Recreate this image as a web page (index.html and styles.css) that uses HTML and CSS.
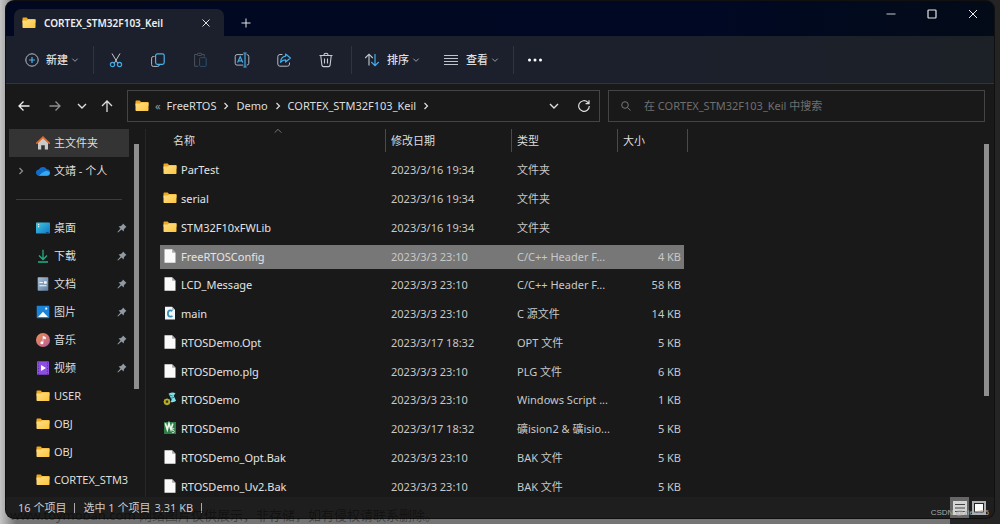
FILE: index.html
```html
<!DOCTYPE html>
<html lang="zh-CN">
<head>
<meta charset="utf-8">
<title>CORTEX_STM32F103_Keil</title>
<link rel="stylesheet" href="styles.css">
</head>
<body>
<svg class="defs" aria-hidden="true">
  <linearGradient id="g-folder" x1="0" y1="0" x2="1" y2="1"><stop offset="0" stop-color="#ffe08a"/><stop offset="1" stop-color="#fcc53c"/></linearGradient>
  <linearGradient id="g-desk" x1="0" y1="0" x2="1" y2="1"><stop offset="0" stop-color="#3ccbe0"/><stop offset="1" stop-color="#1473c4"/></linearGradient>
  <linearGradient id="g-music" x1="0" y1="0" x2="1" y2="1"><stop offset="0" stop-color="#f0914f"/><stop offset="1" stop-color="#b45a9c"/></linearGradient>
  <linearGradient id="g-doc" x1="0" y1="0" x2="1" y2="1"><stop offset="0" stop-color="#a9c0d6"/><stop offset="1" stop-color="#5f7e9e"/></linearGradient>
  <symbol id="folder" viewBox="0 0 14 14"><path d="M.5 2.500q0-.9.9-.9h3.300l1.300 1.300h6.600q.9 0 .9.9v3H.5z" fill="#f0a81c"/><path d="M.5 4.600h4.400l1.200-1h7.400v7.700q0 .8-.8.8H1.300q-.8 0-.8-.8z" fill="url(#g-folder)"/></symbol>
  <symbol id="file" viewBox="0 0 14 14"><path d="M1.500.3h7.600l3.400 3.400v10H1.500z" fill="#fafafa"/><path d="M9.100.3v3.400h3.400z" fill="#a8a8a8"/></symbol>
  <symbol id="cfile" viewBox="0 0 14 14"><path d="M2 .8h7l3 3v9.700H2z" fill="#f4f7f9"/><path d="M9 .8v3h3z" fill="#a8b4bc"/><path d="M9.300 5.200Q8.600 4.400 7.300 4.400 4.900 4.400 4.900 7.600 4.900 10.700 7.300 10.700 8.600 10.700 9.400 9.900" fill="none" stroke="#3c8fb4" stroke-width="1.800"/></symbol>
  <symbol id="script" viewBox="0 0 14 14"><path d="M5.500 1.800q4-2.200 7-.6l-1.800 2.500 2.400 5q-2 2-5.400 1.300l1-2.400z" fill="#7fe0e8"/><path d="M6.500 3l3.200 1M7.800 6.200l3.400-.8" stroke="#177f8c" stroke-width=".9"/><circle cx="4" cy="9.800" r="2.300" fill="none" stroke="#c9c02c" stroke-width="1.700"/><path d="M4 6.200v7.200M.4 9.800h7.200M1.500 7.300l5 5M6.500 7.300l-5 5" stroke="#a8a024" stroke-width=".8"/><circle cx="4" cy="9.800" r="1" fill="#222"/></symbol>
  <symbol id="keil" viewBox="0 0 14 14"><path d="M1 1h12v12H1z" fill="#2f7d46"/><path d="M2.300 2.300l2 6.200 1.700-6 2 6 1.800-6" fill="none" stroke="#eaf5ec" stroke-width="1.700"/><path d="M11.300 7.700H9.300v1.700q2-.3 2 1.200 0 1.300-2.200 1.100" fill="none" stroke="#d5ecd9"/></symbol>
  <symbol id="home" viewBox="0 0 14 14"><path d="M2 6.200L7 1.600l5 4.600v7.300H8.800V9.300H5.200v4.200H2z" fill="#c9c9c9"/><path d="M.8 7.200L7 1.200l6.200 6" fill="none" stroke="#e3692a" stroke-width="1.700" stroke-linecap="round"/></symbol>
  <symbol id="cloud" viewBox="0 0 15 13"><path d="M3.500 11.500A3.200 3.200 0 0 1 3 5 4.800 4.800 0 0 1 11.500 4.500 3.500 3.500 0 0 1 11.600 11.500z" fill="#0f6cc8"/><path d="M3.200 11.600Q6.600 7.200 11.300 6.200 15 7 14.900 9.200 14.500 11.600 11.700 11.600z" fill="#35a9f2"/></symbol>
  <symbol id="desk" viewBox="0 0 14 14"><rect y="1.500" width="14" height="11" rx=".8" fill="url(#g-desk)"/><path d="M2 3h1.200v1.200H2zM2 5h1.200v1.200H2z" fill="#e9fbff"/><path d="M10 11.500h2.500" stroke="#0b4d8c"/></symbol>
  <symbol id="down" viewBox="0 0 14 14"><path d="M7 .7v9.500M3 6.500l4 4 4-4M2 13h10" fill="none" stroke="#20b088" stroke-width="1.300"/></symbol>
  <symbol id="doc" viewBox="0 0 14 14"><rect x="1.700" y=".3" width="10.600" height="13.500" rx=".8" fill="url(#g-doc)"/><path d="M3.400 5h3.500v1H3.400zM8 4.200h2.700v2.500H8zM3.400 8.200h7.200v1H3.400z" fill="#eff5fa"/></symbol>
  <symbol id="pic" viewBox="0 0 14 14"><rect x=".7" y=".7" width="12.600" height="12.600" rx=".8" fill="#1b84d8"/><path d="M2 12l5-5.200 5 5.200z" fill="#f5fbff"/><circle cx="10.200" cy="3.700" r="1.100" fill="#e8f5ff"/></symbol>
  <symbol id="music" viewBox="0 0 14 14"><circle cx="7" cy="7" r="7" fill="url(#g-music)"/><path d="M7 9.700V3.300l2.500 1v1.700L7 5" fill="#fff" stroke="#fff" stroke-width=".6"/><circle cx="5.900" cy="9.700" r="1.500" fill="#fff"/></symbol>
  <symbol id="video" viewBox="0 0 14 14"><rect x="1" y=".3" width="12" height="13.400" rx=".8" fill="#8d4fe0"/><path d="M5 4l5 3-5 3z" fill="#fff"/><path d="M2.500 1.500v12M11.500 1.500v12" stroke="#5a2aa8" stroke-dasharray="1.200 1.500"/></symbol>
  <symbol id="pin" viewBox="0 0 10 10"><path d="M6 .5L9.500 4 8.500 4.500 7 6.200 6.600 8.500 4.500 6.500 1 9.600.4 9 3.500 5.500 1.600 3.500 4 3 5.600 1.500z" fill="#909aa3"/></symbol>
  <symbol id="chev-r" viewBox="0 0 8 8"><path d="M2.500 1l3 3-3 3" fill="none" stroke="currentColor" stroke-width="1.200"/></symbol>
  <symbol id="chev-d" viewBox="0 0 12 12"><path d="M2 4l4 4 4-4" fill="none" stroke="currentColor" stroke-width="1.400"/></symbol>
  <symbol id="chev-u" viewBox="0 0 12 12"><path d="M2 8l4-4 4 4" fill="none" stroke="currentColor"/></symbol>
</svg>

<main class="window">
  <header class="titlebar">
    <div class="tab">
      <svg class="icon"><use href="#folder"/></svg>
      <span class="tab-title">CORTEX_STM32F103_Keil</span>
      <button class="btn" aria-label="关闭标签页"><svg class="i10" viewBox="0 0 10 10"><path d="M1.500 1.500l7 7M8.500 1.500l-7 7" stroke="#ddd"/></svg></button>
    </div>
    <button class="btn new-tab" aria-label="新标签页"><svg class="i10" viewBox="0 0 10 10"><path d="M5 .5v9M.5 5h9" stroke="#e4e4e4"/></svg></button>
    <div class="controls">
      <button class="btn" aria-label="最小化"><svg class="i10" viewBox="0 0 10 10"><path d="M.5 5h9" stroke="#c4c8d0"/></svg></button>
      <button class="btn" aria-label="最大化"><svg class="i10" viewBox="0 0 10 10"><rect x="1" y="1" width="8" height="8" rx=".8" fill="none" stroke="#e8e8e8" stroke-width="1.200"/></svg></button>
      <button class="btn" aria-label="关闭"><svg class="i10" viewBox="0 0 10 10"><path d="M1 1l8 8M9 1L1 9" stroke="#eee"/></svg></button>
    </div>
  </header>

  <div class="toolbar">
    <button class="btn cmd"><svg class="icon" viewBox="0 0 14 14" fill="none"><circle cx="7" cy="7" r="6.200" stroke="#b9bec6"/><path d="M7 4v6M4 7h6" stroke="#4cb4ec" stroke-width="1.200"/></svg>新建<svg class="i8"><use href="#chev-d"/></svg></button>
    <span class="sep"></span>
    <div class="tools">
      <button class="btn" aria-label="剪切"><svg class="i16" viewBox="0 0 16 16" fill="none"><path d="M4 1.500l5.700 9.700M12 1.500l-5.700 9.700" stroke="#c4c8ce"/><circle cx="4.500" cy="12.500" r="2.100" stroke="#3fa9e4" stroke-width="1.200"/><circle cx="11.500" cy="12.500" r="2.100" stroke="#3fa9e4" stroke-width="1.200"/></svg></button>
      <button class="btn" aria-label="复制"><svg class="i16" viewBox="0 0 16 16" fill="none"><path d="M4.500 4.500H3.300Q1.600 4.500 1.600 6.200v6.500q0 1.700 1.700 1.700h4.400q1.500 0 1.700-1.600" stroke="#b5bac2"/><rect x="5.600" y="1.800" width="8.600" height="10.600" rx="1.800" stroke="#49b1ec" stroke-width="1.200"/></svg></button>
      <button class="btn" aria-label="粘贴" disabled><svg class="i16" viewBox="0 0 16 16" fill="none"><path d="M5.500 2.500H2.600v11.800h3.600M9.700 2.500h2.600v2.200" stroke="#4a505c"/><rect x="5.300" y="1.300" width="4.600" height="2.200" rx="1" stroke="#4a505c"/><rect x="7.600" y="5.700" width="6.600" height="8.700" rx="1" stroke="#28506f"/></svg></button>
      <button class="btn" aria-label="重命名"><svg class="i16" viewBox="0 0 16 16" fill="none"><path d="M9.300 2.600H3q-1.800 0-1.800 1.800v6.900q0 1.800 1.800 1.800h6.300M12.700 2.600q2.100 0 2.100 1.800v6.900q0 1.800-2.100 1.800" stroke="#aeb4bd"/><path d="M3.600 10.600L6.200 4.800l2.600 5.800M4.500 8.800h3.400" stroke="#43adea" stroke-width="1.200"/><path d="M11 1.500v13M9.300 1h3.400M9.300 15h3.400" stroke="#43adea" stroke-width="1.200"/></svg></button>
      <button class="btn" aria-label="共享"><svg class="i16" viewBox="0 0 16 16" fill="none"><path d="M6.400 2.500H4q-2.200 0-2.200 2.200V12q0 2.200 2.200 2.200h7.300q2.200 0 2.200-2.200v-1.400" stroke="#b5bac2"/><path d="M9.600 2l4.800 4-4.800 4V7.800Q6.500 7.700 4.600 10.300 4.900 4.900 9.600 4.200z" stroke="#43adea" stroke-width="1.200" stroke-linejoin="round"/></svg></button>
      <button class="btn" aria-label="删除"><svg class="i16" viewBox="0 0 16 16" fill="none"><path d="M1.500 3.500h13M5.800 3.300q.2-2 2.200-2t2.200 2M2.800 3.700l1.100 9.500q.2 1.400 1.600 1.400h5q1.400 0 1.600-1.400l1.100-9.500M6.500 6.500v5M9.500 6.500v5" stroke="#c6cad0" stroke-width="1.100"/></svg></button>
    </div>
    <span class="sep"></span>
    <button class="btn cmd sort"><svg class="i16" viewBox="0 0 16 16" fill="none"><path d="M5 13.500V2.500M1.200 6L5 2.200 8.800 6" stroke="#c6cad0" stroke-width="1.100"/><path d="M11 2v11.500M7.300 10l3.700 3.700 3.700-3.700" stroke="#43adea" stroke-width="1.200"/></svg>排序<svg class="i8"><use href="#chev-d"/></svg></button>
    <button class="btn cmd"><svg class="i16" viewBox="0 0 16 16"><path d="M1 3.500h14M1 6.500h14M1 9.500h14M1 12.500h14" stroke="#c0c4ca"/></svg>查看<svg class="i8"><use href="#chev-d"/></svg></button>
    <span class="sep"></span>
    <button class="btn more" aria-label="更多"><svg class="i16" viewBox="0 0 16 16" fill="#fff"><circle cx="2.500" cy="8" r="1.500"/><circle cx="8" cy="8" r="1.500"/><circle cx="13.500" cy="8" r="1.500"/></svg></button>
  </div>

  <div class="addressbar">
    <nav class="history">
      <button class="btn" aria-label="后退"><svg class="i12" viewBox="0 0 12 12" fill="none" stroke="#eee" stroke-width="1.300"><path d="M11.500 6H1M5.500 1.500L1 6l4.500 4.500"/></svg></button>
      <button class="btn" aria-label="前进"><svg class="i12" viewBox="0 0 12 12" fill="none" stroke="#8f8f8f" stroke-width="1.300"><path d="M.5 6H11M6.500 1.500L11 6l-4.500 4.500"/></svg></button>
      <button class="btn narrow" aria-label="最近浏览"><svg class="i12"><use href="#chev-d"/></svg></button>
      <button class="btn narrow" aria-label="向上"><svg class="i12" viewBox="0 0 12 12" fill="none" stroke="#ddd" stroke-width="1.300"><path d="M6 12V1M1 6l5-5 5 5"/></svg></button>
    </nav>
    <div class="path">
      <svg class="icon"><use href="#folder"/></svg>
      <span class="more-path">«</span>
      <a href="#">FreeRTOS</a><svg class="i8"><use href="#chev-r"/></svg>
      <a href="#">Demo</a><svg class="i8"><use href="#chev-r"/></svg>
      <a href="#">CORTEX_STM32F103_Keil</a><svg class="i8"><use href="#chev-r"/></svg>
      <button class="btn history-btn" aria-label="历史"><svg class="i12"><use href="#chev-d"/></svg></button>
      <button class="btn" aria-label="刷新"><svg class="i12" viewBox="0 0 12 12" fill="none" stroke="#ddd" stroke-width="1.200"><path d="M11.300 6A5.300 5.300 0 1 1 9.800 2.300L11 3.500M11 .2v3.500H7.600"/></svg></button>
    </div>
    <label class="search">
      <svg class="i10" viewBox="0 0 10 10" fill="none" stroke="#777"><circle cx="4" cy="4" r="3.300"/><path d="M6.500 6.500l3 3"/></svg>
      <input type="search" aria-label="搜索" placeholder="在 CORTEX_STM32F103_Keil 中搜索">
    </label>
  </div>

  <div class="content">
    <nav class="side">
      <a class="item active" href="#"><svg class="icon"><use href="#home"/></svg>主文件夹</a>
      <a class="item cloud" href="#"><svg class="i8 expand"><use href="#chev-r"/></svg><svg class="icon"><use href="#cloud"/></svg>文靖 - 个人</a>
      <hr class="divider">
      <a class="item" href="#"><svg class="icon"><use href="#desk"/></svg>桌面<svg class="pin"><use href="#pin"/></svg></a>
      <a class="item" href="#"><svg class="icon"><use href="#down"/></svg>下载<svg class="pin"><use href="#pin"/></svg></a>
      <a class="item" href="#"><svg class="icon"><use href="#doc"/></svg>文档<svg class="pin"><use href="#pin"/></svg></a>
      <a class="item" href="#"><svg class="icon"><use href="#pic"/></svg>图片<svg class="pin"><use href="#pin"/></svg></a>
      <a class="item" href="#"><svg class="icon"><use href="#music"/></svg>音乐<svg class="pin"><use href="#pin"/></svg></a>
      <a class="item" href="#"><svg class="icon"><use href="#video"/></svg>视频<svg class="pin"><use href="#pin"/></svg></a>
      <a class="item" href="#"><svg class="icon"><use href="#folder"/></svg>USER</a>
      <a class="item" href="#"><svg class="icon"><use href="#folder"/></svg>OBJ</a>
      <a class="item" href="#"><svg class="icon"><use href="#folder"/></svg>OBJ</a>
      <a class="item" href="#"><svg class="icon"><use href="#folder"/></svg>CORTEX_STM3</a>
    </nav>
    <div class="scroll"><span class="thumb"></span></div>
    <section class="files">
      <table>
        <colgroup><col class="c-name"><col class="c-date"><col class="c-type"><col class="c-size"></colgroup>
        <thead><tr><th class="sorted">名称<svg class="sort-mark"><use href="#chev-u"/></svg></th><th>修改日期</th><th>类型</th><th>大小</th></tr></thead>
        <tbody>
          <tr><td><svg class="icon"><use href="#folder"/></svg>ParTest</td><td>2023/3/16 19:34</td><td>文件夹</td><td></td></tr>
          <tr><td><svg class="icon"><use href="#folder"/></svg>serial</td><td>2023/3/16 19:34</td><td>文件夹</td><td></td></tr>
          <tr><td><svg class="icon"><use href="#folder"/></svg>STM32F10xFWLib</td><td>2023/3/16 19:34</td><td>文件夹</td><td></td></tr>
          <tr class="selected"><td><svg class="icon"><use href="#file"/></svg>FreeRTOSConfig</td><td>2023/3/3 23:10</td><td>C/C++ Header F...</td><td>4 KB</td></tr>
          <tr><td><svg class="icon"><use href="#file"/></svg>LCD_Message</td><td>2023/3/3 23:10</td><td>C/C++ Header F...</td><td>58 KB</td></tr>
          <tr><td><svg class="icon"><use href="#cfile"/></svg>main</td><td>2023/3/3 23:10</td><td>C 源文件</td><td>14 KB</td></tr>
          <tr><td><svg class="icon"><use href="#file"/></svg>RTOSDemo.Opt</td><td>2023/3/17 18:32</td><td>OPT 文件</td><td>5 KB</td></tr>
          <tr><td><svg class="icon"><use href="#file"/></svg>RTOSDemo.plg</td><td>2023/3/3 23:10</td><td>PLG 文件</td><td>6 KB</td></tr>
          <tr><td><svg class="icon"><use href="#script"/></svg>RTOSDemo</td><td>2023/3/3 23:10</td><td>Windows Script ...</td><td>1 KB</td></tr>
          <tr><td><svg class="icon"><use href="#keil"/></svg>RTOSDemo</td><td>2023/3/17 18:32</td><td>礦ision2 &amp; 礦isio...</td><td>5 KB</td></tr>
          <tr><td><svg class="icon"><use href="#file"/></svg>RTOSDemo_Opt.Bak</td><td>2023/3/3 23:10</td><td>BAK 文件</td><td>5 KB</td></tr>
          <tr><td><svg class="icon"><use href="#file"/></svg>RTOSDemo_Uv2.Bak</td><td>2023/3/3 23:10</td><td>BAK 文件</td><td>5 KB</td></tr>
        </tbody>
      </table>
    </section>
    <div class="scroll main-scroll"><span class="thumb"></span></div>
  </div>

  <footer class="status">
    <span>16 个项目</span><span class="bar"></span><span>选中 1 个项目</span><span class="size">3.31 KB</span><span class="bar"></span>
    <div class="views">
      <button class="btn view on" aria-label="详细信息"><svg viewBox="0 0 14 14"><rect width="14" height="14" fill="#d4d4d4"/><path d="M2 3.500h10M2 7h10M2 10.500h10" stroke="#444" stroke-width="1.200"/></svg></button>
      <button class="btn view" aria-label="大图标"><svg viewBox="0 0 14 14"><rect width="14" height="14" fill="#b0b0b0"/><rect x="2.500" y="2.500" width="9" height="8.500" fill="#fff" stroke="#222"/></svg></button>
    </div>
  </footer>
</main>
<p class="watermark">www.toymoban.com 网络图片仅供展示，非存储，如有侵权请联系删除。</p>
<p class="credit">CSDN @ziect55</p>
</body>
</html>
```

FILE: styles.css
```css
* { box-sizing: border-box; }
html, body { height: 100%; }
body {
  margin: 0;
  padding: 1px 6px 6px;
  display: flex;
  position: relative;
  overflow: hidden;
  font: 11px/16px "Noto Sans", "Noto Sans CJK SC", sans-serif;
  color: #dedede;
  background: linear-gradient(90deg, #c4c4c4 0, #a8a8a8 6px, #757575 16px, #757575 95%, #242424 95%);
}
.defs { position: absolute; width: 0; height: 0; }
a { color: inherit; text-decoration: none; }
svg { flex: none; }
.btn { border: 0; padding: 0; background: none; color: inherit; font: inherit; display: flex; align-items: center; justify-content: center; }
.icon { width: 14px; height: 14px; }
.i8 { width: 8px; height: 8px; }
.i10 { width: 10px; height: 10px; }
.i12 { width: 12px; height: 12px; }
.i16 { width: 16px; height: 16px; }

.window { flex: 1; min-width: 0; display: flex; flex-direction: column; border-radius: 8px; overflow: hidden; background: #191919; box-shadow: 0 0 0 1px #101010; }

.titlebar { flex: none; height: 35px; display: flex; align-items: flex-end; background: linear-gradient(90deg, #020820, #000824 70%, #030b18); }
.tab { width: 210px; height: 27px; margin-left: 8px; padding: 0 13px 0 8px; display: flex; align-items: center; background: #1b202c; border-radius: 7px 7px 0 0; }
.tab-title { flex: 1; margin-left: 8px; font-size: 10px; font-weight: 600; color: #f0f0f0; }
.new-tab { width: 24px; height: 27px; margin-left: 10px; }
.controls { margin-left: auto; padding-right: 1px; align-self: stretch; display: flex; }
.controls .btn { width: 41px; height: 25px; }

.toolbar { flex: none; height: 48px; padding-left: 19px; display: flex; align-items: center; background: linear-gradient(90deg, #1b202c 70%, #1b2127); border-bottom: 1px solid #343434; }
.cmd { gap: 7px; font-weight: 500; }
.cmd .i8 { color: #a4a9b2; margin-left: -4px; }
.sep { width: 1px; height: 28px; background: #2e3440; }
.tools { display: flex; margin: 0 1px; }
.tools .btn { width: 42px; height: 32px; }
.tools + .sep { margin-left: 3px; }
.sort { margin: 0 23px 0 12px; }
.cmd + .sep { margin-left: 14px; }
.more { margin-left: 13px; }

.addressbar { flex: none; height: 45px; padding: 6px 9px 7px 0; display: grid; grid-template-columns: 113px 473fr 377fr; column-gap: 8px; }
.history { display: flex; padding-left: 3px; }
.history .btn { width: 31px; }
.history .narrow { width: 25px; }
.path { min-width: 0; border: 1px solid #444; padding: 0 9px 0 7px; display: flex; align-items: center; gap: 6px; }
.path .more-path { color: #999; }
.history-btn { margin-left: auto; margin-right: 12px; }
.search { min-width: 0; padding: 0 12px; display: flex; align-items: center; gap: 13px; border: 1px solid #444; }
.search input { flex: 1; min-width: 0; padding: 0; border: 0; outline: 0; background: none; color: #ddd; font: inherit; }
.search input::placeholder { color: #6f6f6f; opacity: 1; }

.content { flex: 1; min-height: 0; display: flex; overflow: hidden; }
.side { width: 126px; padding-left: 3px; overflow: hidden; }
.item { height: 28px; padding-left: 27px; display: flex; align-items: center; gap: 4px; white-space: nowrap; margin-right: 3px; }
.item.active { background: #343434; }
.item.cloud { padding-left: 8px; }
.expand { color: #909090; margin-right: 7px; }
.pin { width: 10px; height: 10px; margin: 0 2px 0 auto; }
.divider { height: 1px; margin: 14px 10px 14px 7px; border: 0; background: #3c3c3c; }
.scroll { width: 14px; padding: 15px 4px 0 2px; border-right: 1px solid #272727; }
.thumb { display: block; width: 5px; height: 245px; background: #8f8f8f; }
.main-scroll { padding-left: 4px; border: 0; }
.main-scroll .thumb { height: 252px; }

.files { flex: 1; min-width: 0; padding-left: 14px; overflow: hidden; }
table { width: 528px; height: 372px; border-collapse: collapse; table-layout: fixed; white-space: nowrap; }
.c-name { width: 226px; }
.c-date { width: 126px; }
.c-type { width: 106px; }
.c-size { width: 70px; }
th { position: relative; height: 27px; padding: 0 5px 3px; text-align: left; font-weight: 400; background: linear-gradient(#4a4a4a, #4a4a4a) right top / 1px 23px no-repeat; }
th.sorted { padding-left: 13px; }
.sort-mark { position: absolute; left: 50%; top: -3px; width: 10px; height: 10px; color: #888; }
td { padding: 0 5px; color: #c8c8c8; }
td:first-child { padding-left: 3px; color: #e4e4e4; }
td:last-child { padding-right: 7px; text-align: right; }
td .icon { vertical-align: -2px; margin-right: 4px; }
.selected { background: linear-gradient(#777, #777) left / 524px 24px no-repeat; }

.status { flex: none; height: 21px; padding: 0 6px 0 12px; display: flex; align-items: center; gap: 8px; background: #1e1e1e; color: #ccc; }
.bar { width: 1px; height: 10px; background: #aaa; }
.size { margin-left: -4px; }
.views { margin-left: auto; align-self: stretch; display: flex; }
.view { width: 19px; }
.view svg { width: 14px; height: 14px; }
.view.on { background: #666; }

.watermark { position: absolute; left: 10px; bottom: 0; margin: 0; font-size: 13px; line-height: 18px; color: rgba(0, 0, 0, 0.4); white-space: nowrap; }
.credit { position: absolute; right: 11px; bottom: 5px; margin: 0; font: 8px/12px "Liberation Sans", sans-serif; color: #aaa; }
```
